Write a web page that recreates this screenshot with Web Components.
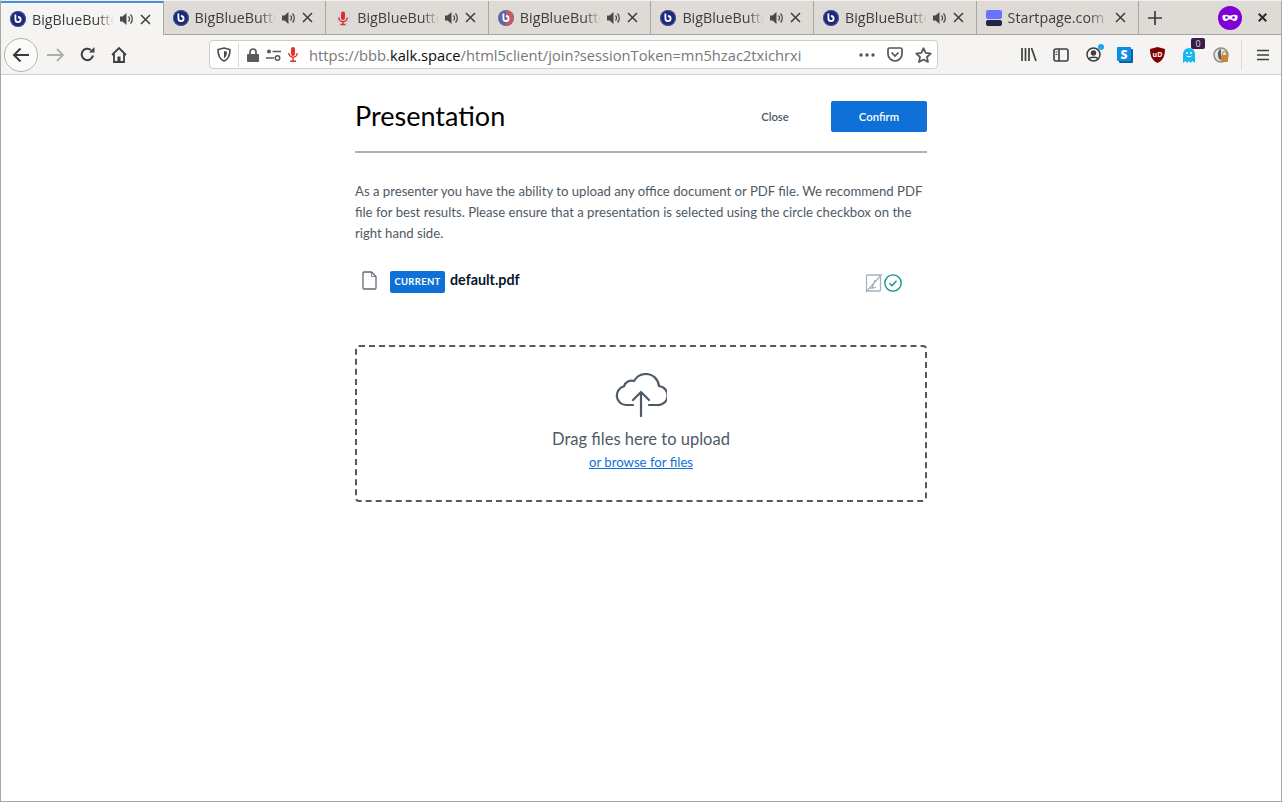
<!DOCTYPE html>
<html>
<head>
<meta charset="utf-8">
<title>Presentation</title>
<style>
  html, body { margin: 0; height: 100%; background: #fff; }
  body { width: 1282px; height: 802px; overflow: hidden; }
</style>
</head>
<body>
<browser-window>
  <tab-strip slot="tabs">
    <browser-tab active icon="bbb" audio>BigBlueButton</browser-tab>
    <browser-tab icon="bbb" audio>BigBlueButton</browser-tab>
    <browser-tab icon="mic" audio>BigBlueButton</browser-tab>
    <browser-tab icon="bbb-red" audio>BigBlueButton</browser-tab>
    <browser-tab icon="bbb" audio>BigBlueButton</browser-tab>
    <browser-tab icon="bbb" audio>BigBlueButton</browser-tab>
    <browser-tab icon="start">Startpage.com Search</browser-tab>
  </tab-strip>
  <nav-bar slot="nav"></nav-bar>
  <upload-modal slot="page">
    <file-row slot="files" name="default.pdf"></file-row>
    <drop-zone slot="drop"></drop-zone>
  </upload-modal>
</browser-window>

<script>
class BrowserWindow extends HTMLElement {
  constructor() {
    super();
    this.attachShadow({mode: 'open'}).innerHTML = `
      <style>
        :host { display: flex; flex-direction: column; width: 1282px; height: 802px; box-sizing: border-box;
          border: 1px solid #a9a7a4; border-top-color: #f0efed; }
        .page { flex: 1; background: #fff; }
      </style>
      <slot name="tabs"></slot>
      <slot name="nav"></slot>
      <div class="page"><slot name="page"></slot></div>`;
  }
}

const BBB_B = `<path d="M5.400 3.400v5.200a2.600 2.600 0 1 0 2.600-2.600" fill="none" stroke="#fff" stroke-width="1.800"/>`;
const TAB_ICONS = {
  bbb: `<circle cx="8" cy="8" r="8" fill="#1e2a78"/><circle cx="8" cy="8" r="7.500" fill="none" stroke="#5f6aa8" stroke-width="1" opacity=".6"/>${BBB_B}`,
  'bbb-red': `<circle cx="8" cy="8" r="8" fill="#5c67a8"/><path d="M8 0a8 8 0 0 1 0 16z" fill="#c45a66"/>${BBB_B}`,
  mic: `<circle cx="8" cy="8" r="8" fill="#d6d6dc"/><rect x="6" y="1.500" width="4" height="8.500" rx="2" fill="#e02b20"/><path d="M3.800 7.500a4.200 4.200 0 0 0 8.400 0M8 12v2.500M5.500 14.500h5" fill="none" stroke="#e02b20" stroke-width="1.400"/>`,
  start: `<rect width="16" height="9" rx="2" fill="#6573ff"/><rect y="10" width="16" height="6" rx="2" fill="#1e2547"/>`
};

class TabStrip extends HTMLElement {
  constructor() {
    super();
    this.attachShadow({mode: 'open'}).innerHTML = `
      <style>
        :host { display: flex; height: 33px; background: #dedbd7; border-bottom: 1px solid #a8a6a2; position: relative; }
        .tabs { display: flex; }
        .plus { width: 32px; display: flex; align-items: center; justify-content: center; }
        .space { flex: 1; }
        .mask { width: 26px; display: flex; align-items: center; justify-content: center; }
        .x { width: 38px; display: flex; align-items: center; justify-content: center; }
      </style>
      <div class="tabs"><slot></slot></div>
      <div class="plus"><svg width="16" height="16" viewBox="0 0 16 16"><path d="M8 1v14M1 8h14" stroke="#3b3b3b" stroke-width="1.700"/></svg></div>
      <div class="space"></div>
      <div class="mask"><svg width="24" height="24" viewBox="0 0 24 24"><circle cx="12" cy="12" r="12" fill="#8000d7"/><path d="M4.500 9.500c2-1 4.500-.8 7.500.2 3-1 5.500-1.200 7.500-.2.500 3-.5 5.500-3 5.500-2 0-3-1.700-4.500-1.700S9.500 15 7.500 15c-2.500 0-3.500-2.500-3-5.500z" fill="#fff"/><circle cx="8.500" cy="11.500" r="1.300" fill="#8000d7"/><circle cx="15.500" cy="11.500" r="1.300" fill="#8000d7"/></svg></div>
      <div class="x"><svg width="9" height="9" viewBox="0 0 9 9"><path d="M.7.700l7.600 7.600M8.300.700L.7 8.300" stroke="#2b2b2b" stroke-width="2"/></svg></div>`;
  }
}

class BrowserTab extends HTMLElement {
  constructor() {
    super();
    const active = this.hasAttribute('active');
    const audio = this.hasAttribute('audio');
    this.attachShadow({mode: 'open'}).innerHTML = `
      <style>
        :host { display: flex; align-items: center; box-sizing: border-box; width: 162.6px; height: 34px; padding: 0 12px 0 9px;
          border-right: 1px solid #a8a6a2; color: #3d3d3d; font: 14.3px "Open Sans", "Noto Sans", sans-serif; gap: 6px;
          ${active ? 'background: #f5f4f2; border-top: 2px solid #4a90d9;' : 'padding-bottom: 1px;'} }
        svg.fav { flex: none; }
        .label { flex: 1; min-width: 0; overflow: hidden; white-space: nowrap;
          -webkit-mask-image: linear-gradient(to right, #000 80%, transparent 100%); mask-image: linear-gradient(to right, #000 80%, transparent 100%); }
        .btns { display: flex; align-items: center; gap: 6px; flex: none; }
      </style>
      <svg class="fav" width="16" height="16" viewBox="0 0 16 16">${TAB_ICONS[this.getAttribute('icon')]}</svg>
      <span class="label"><slot></slot></span>
      <span class="btns">
        ${audio ? `<svg width="14" height="14" viewBox="0 0 14 14"><path d="M0 4.500h2.500L6.500 1v12L2.500 9.500H0z" fill="#4a4a4a"/><path d="M8.500 4.500a3.500 3.500 0 0 1 0 5M10.500 2.500a6.500 6.500 0 0 1 0 9" fill="none" stroke="#4a4a4a" stroke-width="1.300"/></svg>` : ''}
        <svg width="11" height="11" viewBox="0 0 11 11"><path d="M1 1l9 9M10 1l-9 9" stroke="#3d3d3d" stroke-width="1.500"/></svg>
      </span>`;
  }
}

class NavBar extends HTMLElement {
  constructor() {
    super();
    this.attachShadow({mode: 'open'}).innerHTML = `
      <style>
        :host { display: flex; align-items: center; height: 39px; background: #f5f4f2; border-bottom: 1px solid #d2d0cc; padding-left: 3px; }
        svg { display: block; flex: none; }
        .back { box-sizing: border-box; width: 34px; height: 34px; border: 1px solid #b4b2ae; border-radius: 50%; background: #fbfbfa; display: flex; align-items: center; justify-content: center; flex: none; }
        .btn { width: 32px; display: flex; justify-content: center; flex: none; }
        .url { box-sizing: border-box; width: 729px; height: 29px; margin-left: 74px; background: #fff; border: 1px solid #cfcdc9; border-radius: 4px;
          display: flex; align-items: center; padding-left: 7px; font: 14.7px "Open Sans", "Noto Sans", sans-serif; color: #77777a; flex: none; }
        .sep { width: 1px; height: 24px; background: #dbd9d6; margin: 0 8px 0 7px; }
        .addr { margin-left: 11px; flex: 1; white-space: nowrap; overflow: hidden; }
        .addr b { font-weight: 400; color: #0c0c0d; }
        .right { display: flex; align-items: center; margin-left: 6px; }
        .ic { width: 32px; display: flex; justify-content: center; flex: none; position: relative; }
        .tools { display: flex; align-items: center; margin-left: auto; }
        .vsep { width: 1px; height: 30px; background: #dcdad6; margin: 0 3px 0 4px; }
        .badge { position: absolute; left: 18px; top: -9px; width: 14px; height: 11px; background: #3a1c4a; color: #ddd; font: 9px/11px "Open Sans", sans-serif; text-align: center; border-radius: 2px; }
        .dot { position: absolute; left: 21px; top: -3px; width: 6px; height: 6px; background: #1fa5ee; border-radius: 50%; }
      </style>
      <div class="back"><svg width="18" height="16" viewBox="0 0 18 16"><path d="M17 8H2M8.500 1.500L2 8l6.500 6.500" fill="none" stroke="#3a3a3a" stroke-width="2"/></svg></div>
      <div class="btn" style="margin-left:1px"><svg width="17" height="14" viewBox="0 0 17 14"><path d="M0 7h15.500M10 1l6 6-6 6" fill="none" stroke="#aeaeac" stroke-width="1.800"/></svg></div>
      <div class="btn"><svg width="15" height="15" viewBox="0 0 15 15"><path d="M13 8.500A5.700 5.700 0 1 1 11 3" fill="none" stroke="#3f3f3f" stroke-width="2"/><path d="M9 5.500h5.500V0z" fill="#3f3f3f"/></svg></div>
      <div class="btn"><svg width="16" height="16" viewBox="0 0 16 16"><path d="M1 8l7-7 7 7M3 7v8h10V7" fill="none" stroke="#3f3f3f" stroke-width="1.800"/><rect x="6.500" y="9.500" width="3" height="5.500" fill="#3f3f3f"/></svg></div>
      <div class="url">
        <svg width="14" height="15" viewBox="0 0 14 15"><path d="M7 1l6 1.500c0 6-2 10-6 11.500C3 12.500 1 8.500 1 2.500z" fill="none" stroke="#4a4a4f" stroke-width="1.600"/><path d="M7 4l3 .8c0 3-1 5.500-3 6.500z" fill="#4a4a4f"/></svg>
        <span class="sep"></span>
        <svg width="12" height="14" viewBox="0 0 12 14"><path d="M3 6V4a3 3 0 0 1 6 0v2" fill="none" stroke="#5a5a5a" stroke-width="1.700"/><rect y="6" width="12" height="8" rx="1" fill="#5a5a5a"/></svg>
        <svg style="margin-left:7px" width="15" height="12" viewBox="0 0 15 12"><circle cx="3" cy="2.500" r="2" fill="#5a5a5a"/><path d="M6.500 2.500H15M0 9h8" stroke="#5a5a5a" stroke-width="1.500"/><circle cx="11.500" cy="9" r="2.300" fill="none" stroke="#5a5a5a" stroke-width="1.500"/></svg>
        <svg style="margin-left:7px" width="10" height="15" viewBox="0 0 10 15"><rect x="3" y="0" width="4" height="9" rx="2" fill="#e0352b"/><path d="M.8 6a4.200 4.200 0 0 0 8.400 0M5 10.500V14M2 14.300h6" fill="none" stroke="#e0352b" stroke-width="1.400"/></svg>
        <span class="addr">https://bbb.<b>kalk.space</b>/html5client/join?sessionToken=mn5hzac2txichrxi</span>
        <span class="right">
          <svg width="16" height="4" viewBox="0 0 16 4"><circle cx="2" cy="2" r="1.700" fill="#555"/><circle cx="8" cy="2" r="1.700" fill="#555"/><circle cx="14" cy="2" r="1.700" fill="#555"/></svg>
          <svg style="margin-left:12px" width="16" height="15" viewBox="0 0 16 15"><path d="M1 2.500c0-.8.600-1.500 1.500-1.500h11c.9 0 1.500.7 1.500 1.500V7a7 7 0 0 1-14 0z" fill="none" stroke="#555" stroke-width="1.700"/><path d="M4.500 5.500L8 9l3.500-3.500" fill="none" stroke="#555" stroke-width="1.700"/></svg>
          <svg style="margin-left:12px;margin-right:5px" width="17" height="16" viewBox="0 0 17 16"><path d="M8.500 1.200l2.200 4.700 5.100.6-3.800 3.500 1 5-4.500-2.500L4 15l1-5-3.800-3.500 5.100-.6z" fill="none" stroke="#555" stroke-width="1.700" stroke-linejoin="round"/></svg>
        </span>
      </div>
      <div class="tools">
        <div class="ic"><svg width="16" height="15" viewBox="0 0 16 15"><path d="M1 1v13M4.500 1v13M8 1v13M10.500 1l4.500 13" stroke="#3f3f3f" stroke-width="1.700" fill="none"/></svg></div>
        <div class="ic"><svg width="16" height="14" viewBox="0 0 16 14"><rect x="1" y="1" width="14" height="12" rx="2" fill="none" stroke="#3f3f3f" stroke-width="1.600"/><path d="M6 1v12" stroke="#3f3f3f" stroke-width="1.600"/><path d="M2.500 4h2M2.500 6.500h2" stroke="#3f3f3f" stroke-width="1"/></svg></div>
        <div class="ic"><svg width="15" height="15" viewBox="0 0 15 15"><circle cx="7.500" cy="7.500" r="6.500" fill="none" stroke="#3f3f3f" stroke-width="1.500"/><circle cx="7.500" cy="6" r="2.700" fill="#3f3f3f"/><path d="M3 12c1-2.500 8-2.500 9 0" stroke="#3f3f3f" stroke-width="1.500" fill="none"/></svg><span class="dot"></span></div>
        <div class="ic"><svg width="16" height="16" viewBox="0 0 16 16"><rect x="2" y="2" width="14" height="14" rx="1" fill="#0d5f98"/><rect width="14" height="14" rx="1" fill="#0c8ee6"/><text x="7" y="11.500" font-family="Open Sans, sans-serif" font-weight="800" font-size="12" fill="#fff" text-anchor="middle">S</text></svg></div>
        <div class="ic"><svg width="15" height="16" viewBox="0 0 15 16"><path d="M7.500 0L15 2c0 7-2 11.500-7.500 14C2 13.500 0 9 0 2z" fill="#800000"/><text x="7.500" y="10" font-family="Open Sans, sans-serif" font-weight="700" font-size="7" fill="#fff" text-anchor="middle">uD</text></svg></div>
        <div class="ic"><svg width="14" height="16" viewBox="0 0 14 16"><path d="M1 7a6 6 0 0 1 12 0v9l-2.500-2-2 2-1.500-2-2 2-1.500-2L1 16z" fill="#16b8f2"/><circle cx="5" cy="6" r="1" fill="#fff"/><circle cx="9" cy="6" r="1" fill="#fff"/><path d="M4.500 9c1.500 1 3.500 1 5 0" stroke="#fff" fill="none"/></svg><span class="badge">0</span></div>
        <div class="ic"><svg width="16" height="16" viewBox="0 0 16 16"><circle cx="8" cy="8" r="7" fill="#e6e6e6" stroke="#8a8a8a" stroke-width="1.500"/><path d="M8 2c-3 1-4 5-2 10l2 1z" fill="#5f5f5f"/><rect x="8" y="8" width="7" height="7" rx="1" fill="#c9882f"/><path d="M9.500 8V6.500a2 2 0 0 1 4 0V8" stroke="#c9882f" fill="none" stroke-width="1.200"/></svg></div>
        <div class="vsep"></div>
        <div class="ic" style="width:36px"><svg width="12" height="12" viewBox="0 0 12 12"><path d="M0 1.500h12M0 6h12M0 10.500h12" stroke="#3f3f3f" stroke-width="1.600"/></svg></div>
      </div>`;
  }
}

class UploadModal extends HTMLElement {
  constructor() {
    super();
    this.attachShadow({mode: 'open'}).innerHTML = `
      <style>
        :host { display: block; box-sizing: border-box; width: 572px; margin-left: 354px; font-family: "Source Sans Pro", Lato, "Noto Sans", sans-serif; }
        header { display: flex; align-items: flex-start; height: 78px; box-sizing: border-box; border-bottom: 2px solid #a7b3bd; padding-top: 26px; }
        h1 { margin: 0 auto 0 0; font-size: 27px; line-height: 29px; font-weight: 400; color: #000; }
        .btn { font: 600 11.3px "Source Sans Pro", Lato, sans-serif; border: 0; border-radius: 2px; height: 31px; }
        .close { background: none; color: #4e5a66; width: 88px; margin-right: 12px; }
        .confirm { background: #0f70d7; color: #fff; width: 96px; }
        p { margin: 28px 0 0; font-size: 13.15px; line-height: 21px; color: #4e5a66; }
      </style>
      <header>
        <h1>Presentation</h1>
        <button class="btn close">Close</button>
        <button class="btn confirm">Confirm</button>
      </header>
      <p>As a presenter you have the ability to upload any office document or PDF file. We recommend PDF file for best results. Please ensure that a presentation is selected using the circle checkbox on the right hand side.</p>
      <slot name="files"></slot>
      <slot name="drop"></slot>`;
  }
}

class FileRow extends HTMLElement {
  constructor() {
    super();
    this.attachShadow({mode: 'open'}).innerHTML = `
      <style>
        :host { display: flex; align-items: center; height: 36px; margin-top: 18px; color: #06172a; }
        .doc { margin-left: 7px; }
        .tag { margin: 4px 0 0 13px; background: #0f70d7; color: #fff; font-size: 9.5px; font-weight: 700; letter-spacing: .3px; width: 55px; height: 22px; line-height: 22px; text-align: center; border-radius: 2px; }
        .name { margin: 0 0 2px 5px; font-weight: 700; font-size: 14.3px; }
        .acts { margin: 6px 25px 0 auto; display: flex; align-items: center; }
      </style>
      <svg class="doc" width="15" height="19" viewBox="0 0 15 19"><path d="M1 2a1 1 0 0 1 1-1h7.500L14 5.500V17a1 1 0 0 1-1 1H2a1 1 0 0 1-1-1z" fill="none" stroke="#5f6b77" stroke-width="1.300"/><path d="M9.500 1v4.500H14" fill="none" stroke="#5f6b77" stroke-width=".8"/></svg>
      <span class="tag">CURRENT</span>
      <span class="name">${this.getAttribute('name')}</span>
      <span class="acts">
        <svg width="18" height="20" viewBox="0 0 18 20"><rect x="1.500" y="2" width="14" height="16" rx="1" fill="none" stroke="#a7b3bd" stroke-width="1.300"/><path d="M7 15l3-8M5 15c2 .5 4 0 6-1" stroke="#8e9aa5" fill="none"/><path d="M1 19L17 1" stroke="#a7b3bd" stroke-width="1.200"/></svg>
        <svg style="margin-left:1px" width="18" height="18" viewBox="0 0 18 18"><circle cx="9" cy="9" r="8.200" fill="none" stroke="#0c8c8c" stroke-width="1.300"/><path d="M5.500 9.200L8 11.700l4.500-5" fill="none" stroke="#0c8c8c" stroke-width="1.300"/></svg>
      </span>`;
  }
}

class DropZone extends HTMLElement {
  constructor() {
    super();
    this.attachShadow({mode: 'open'}).innerHTML = `
      <style>
        :host { display: flex; flex-direction: column; align-items: center; box-sizing: border-box; height: 157px; margin-top: 47px;
          border: 2px dashed #4e5a66; border-radius: 4px; color: #4e5a66; padding-top: 26px; }
        svg { display: block; }
        .t { font-size: 16.5px; line-height: 22px; margin-top: 11px; }
        a { font-size: 13.2px; line-height: 18px; color: #0f70d7; text-decoration: underline; margin-top: 3px; }
      </style>
      <svg width="52" height="44" viewBox="0 0 52 44"><path d="M18 32H11a9.500 9.500 0 0 1-2-18.700A8 8 0 0 1 19 8C22 3 27 1 31 1c7 0 12 5 13 12a9.500 9.500 0 0 1-2 19h-8" fill="none" stroke="#4e5a66" stroke-width="2.200" stroke-linecap="round"/><path d="M26 43V19M18 27l8-8 8 8" fill="none" stroke="#4e5a66" stroke-width="2.200" stroke-linecap="round" stroke-linejoin="round"/></svg>
      <div class="t">Drag files here to upload</div>
      <a>or browse for files</a>`;
  }
}

customElements.define('browser-window', BrowserWindow);
customElements.define('tab-strip', TabStrip);
customElements.define('browser-tab', BrowserTab);
customElements.define('nav-bar', NavBar);
customElements.define('upload-modal', UploadModal);
customElements.define('file-row', FileRow);
customElements.define('drop-zone', DropZone);
</script>
</body>
</html>
